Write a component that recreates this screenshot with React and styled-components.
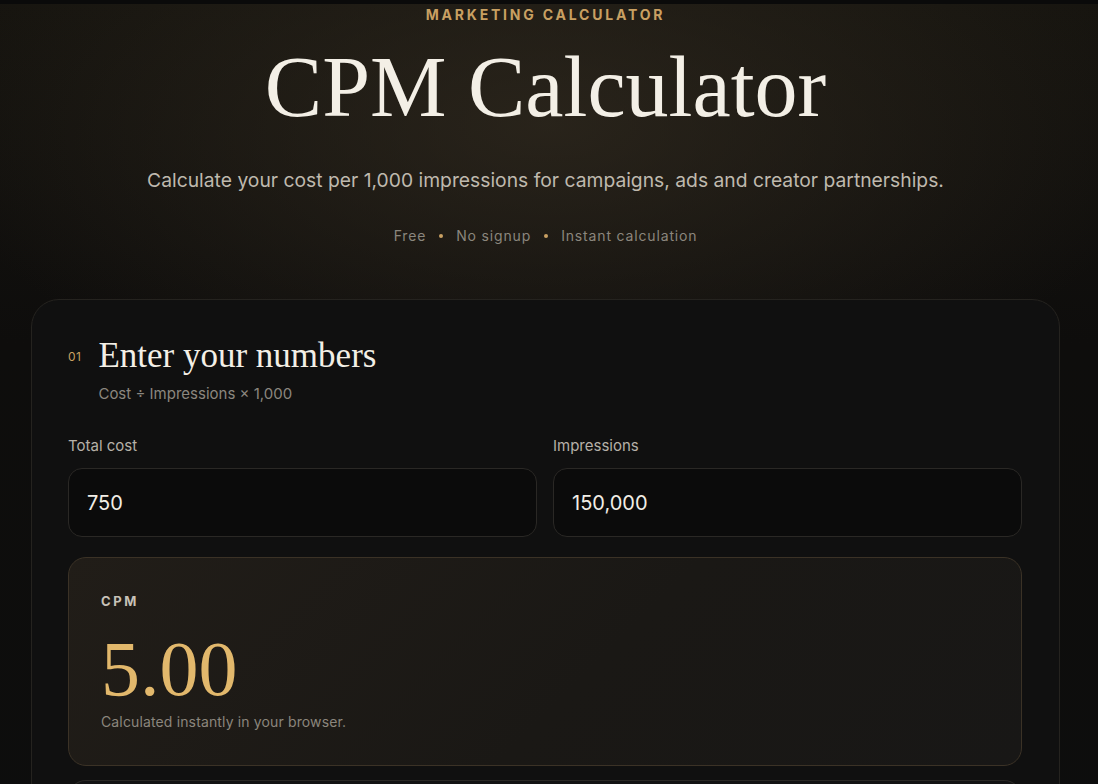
import { useState } from "react";
import styled, { createGlobalStyle } from "styled-components";

const GlobalStyle = createGlobalStyle`
  html, body {
    margin: 0;
    padding: 0;
    background: #0d0d0d;
    font-family: "Inter", "Liberation Sans", sans-serif;
    color: #f2eee6;
  }
  * { box-sizing: border-box; }
`;

const Page = styled.div`
  min-height: 784px;
  border-top: 4px solid #0a0a0a;
  background:
    radial-gradient(ellipse 620px 300px at 50% 120px, rgba(50, 43, 32, 0.7), rgba(20, 18, 15, 0) 100%),
    linear-gradient(#16140f 0px, #0e0d0c 340px, #0d0d0d 100%);
  padding: 0 38px 40px 31px;
`;

const Hero = styled.header`
  display: flex;
  flex-direction: column;
  align-items: center;
  text-align: center;
  padding-top: 3px;
`;

const Eyebrow = styled.div`
  font-family: "Inter", "Liberation Sans", sans-serif;
  font-size: 14px;
  font-weight: 700;
  letter-spacing: 0.2em;
  color: #c9a062;
  line-height: 16px;
`;

const Title = styled.h1`
  margin: 14px 0 0;
  font-family: "Liberation Serif", "DejaVu Serif", serif;
  font-weight: 400;
  font-size: 86px;
  line-height: 100px;
  color: #f3efe6;
`;

const Lead = styled.p`
  margin: 29px 0 0;
  font-size: 19.3px;
  line-height: 28px;
  color: #bfb9ae;
`;

const Perks = styled.div`
  display: flex;
  align-items: center;
  gap: 13px;
  margin-top: 33px;
  font-size: 14px;
  letter-spacing: 0.06em;
  color: #8b867d;
`;

const Dot = styled.span`
  width: 4px;
  height: 4px;
  border-radius: 50%;
  background: #c9a062;
`;

const Card = styled.section`
  margin-top: 55px;
  border: 1px solid #25231f;
  border-radius: 28px;
  background: #101010;
  padding: 35px 37px 40px 36px;
`;

const StepHead = styled.div`
  display: flex;
  align-items: flex-start;
  gap: 17px;
`;

const StepNum = styled.span`
  font-size: 12px;
  color: #c9a062;
  margin-top: 14px;
  letter-spacing: 0.04em;
`;

const StepTitle = styled.h2`
  margin: 0;
  font-family: "Liberation Serif", "DejaVu Serif", serif;
  font-weight: 400;
  font-size: 35px;
  line-height: 42px;
  color: #f3efe6;
`;

const StepSub = styled.div`
  margin-top: 7px;
  font-size: 15px;
  color: #8b877f;
`;

const Fields = styled.div`
  display: grid;
  grid-template-columns: 1fr 1fr;
  gap: 16px;
  margin-top: 33px;
`;

const Field = styled.label`
  display: flex;
  flex-direction: column;
  gap: 12px;
`;

const Label = styled.span`
  font-size: 15px;
  color: #b6b1a8;
  line-height: 20px;
`;

const Input = styled.input`
  height: 69px;
  width: 100%;
  border: 1px solid #2a2825;
  border-radius: 14px;
  background: #0b0b0b;
  padding: 0 18px;
  font-family: "Inter", "Liberation Sans", sans-serif;
  font-size: 20px;
  color: #f2eee6;
  outline: none;
`;

const Result = styled.div`
  margin-top: 20px;
  border: 1px solid #3b3226;
  border-radius: 18px;
  background: linear-gradient(135deg, #211d18 0%, #1a1815 55%, #181716 100%);
  padding: 35px 32px 32px;
  min-height: 209px;
`;

const ResultLabel = styled.div`
  font-size: 13px;
  font-weight: 700;
  letter-spacing: 0.2em;
  color: #c8c2b8;
`;

const ResultValue = styled.div`
  margin-top: 21px;
  font-family: "Liberation Serif", "DejaVu Serif", serif;
  font-size: 78px;
  line-height: 78px;
  color: #e2b86c;
`;

const ResultNote = styled.div`
  margin-top: 5px;
  font-size: 14px;
  color: #8b867d;
  letter-spacing: 0.01em;
`;

const NextCard = styled.div`
  margin-top: 14px;
  height: 40px;
  border: 1px solid #2a2825;
  border-bottom: none;
  border-radius: 18px 18px 0 0;
  background: #131313;
`;

const toNumber = (v) => parseFloat(String(v).replace(/,/g, "")) || 0;

function App() {
  const [cost, setCost] = useState("750");
  const [impressions, setImpressions] = useState("150,000");

  const imp = toNumber(impressions);
  const cpm = imp > 0 ? (toNumber(cost) / imp) * 1000 : 0;

  return (
    <Page>
      <GlobalStyle />
      <Hero>
        <Eyebrow>MARKETING CALCULATOR</Eyebrow>
        <Title>CPM Calculator</Title>
        <Lead>Calculate your cost per 1,000 impressions for campaigns, ads and creator partnerships.</Lead>
        <Perks>
          <span>Free</span>
          <Dot />
          <span>No signup</span>
          <Dot />
          <span>Instant calculation</span>
        </Perks>
      </Hero>

      <Card>
        <StepHead>
          <StepNum>01</StepNum>
          <div>
            <StepTitle>Enter your numbers</StepTitle>
            <StepSub>Cost ÷ Impressions × 1,000</StepSub>
          </div>
        </StepHead>

        <Fields>
          <Field>
            <Label>Total cost</Label>
            <Input value={cost} onChange={(e) => setCost(e.target.value)} />
          </Field>
          <Field>
            <Label>Impressions</Label>
            <Input value={impressions} onChange={(e) => setImpressions(e.target.value)} />
          </Field>
        </Fields>

        <Result>
          <ResultLabel>CPM</ResultLabel>
          <ResultValue>{cpm.toFixed(2)}</ResultValue>
          <ResultNote>Calculated instantly in your browser.</ResultNote>
        </Result>

        <NextCard />
      </Card>
    </Page>
  );
}

export default App;
